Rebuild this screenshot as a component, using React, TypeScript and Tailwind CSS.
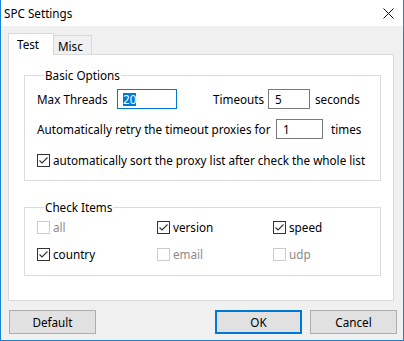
import React from "react";

const font = { fontFamily: '"Noto Sans", "Liberation Sans", Arial, sans-serif' };

function Check({ checked, disabled }: { checked?: boolean; disabled?: boolean }) {
  return (
    <div
      className={`w-[13px] h-[13px] shrink-0 border bg-white flex items-center justify-center ${
        disabled ? "border-[#cccccc]" : "border-[#333333]"
      }`}
    >
      {checked && (
        <svg width="11" height="11" viewBox="0 0 11 11">
          <path d="M1.5 5.5 L4 8 L9.5 2.5" fill="none" stroke="#333333" strokeWidth="1.1" />
        </svg>
      )}
    </div>
  );
}

function CheckItem({ label, checked, disabled }: { label: string; checked?: boolean; disabled?: boolean }) {
  return (
    <div className="flex items-center gap-[3px] h-[16px]">
      <Check checked={checked} disabled={disabled} />
      <span className={disabled ? "text-[#8a8a8a]" : "text-black"}>{label}</span>
    </div>
  );
}

export default function App() {
  return (
    <div
      className="w-[404px] h-[341px] flex flex-col bg-[#f0f0f0] border-l border-r border-b border-[#1883d7] text-[11.7px] leading-[16px] text-black"
      style={font}
    >
      <div className="h-[26px] bg-white flex items-center justify-between pl-[3px] pr-[9px] shrink-0">
        <span>SPC Settings</span>
        <svg width="11" height="11" viewBox="0 0 11 11">
          <path d="M0.5 0.5 L10.5 10.5 M10.5 0.5 L0.5 10.5" stroke="#111" strokeWidth="1" />
        </svg>
      </div>
      <div className="flex-1 flex flex-col pl-[7px] pt-[7px]">
        <div className="flex items-end h-[21px] relative z-10">
          <div className="w-[46px] h-[22px] mb-[-1px] bg-white border-l border-t border-r border-[#d9d9d9] pl-[8px] pt-[2px]">
            Test
          </div>
          <div className="w-[39px] h-[19px] ml-[-1px] border-l border-t border-r border-[#d9d9d9] pl-[4px] pt-[2px]">
            Misc
          </div>
        </div>
        <div className="w-[386px] h-[247px] bg-white border border-[#d9d9d9] flex flex-col pl-[15px] pt-[12px]">
          <fieldset className="w-[357px] h-[114px] border border-[#dcdcdc] pl-[12px]">
            <legend className="ml-[7px] px-[1px] leading-[16px]">Basic Options</legend>
            <div className="flex flex-col pt-[6px]">
              <div className="flex items-center h-[20px]">
                <span className="w-[80px]">Max Threads</span>
                <div className="w-[60px] h-[20px] border border-[#0078d7] flex items-center pl-[5px]">
                  <span className="bg-[#0078d7] text-white leading-[13px]">20</span>
                </div>
                <span className="w-[36px]" />
                <span className="w-[55px]">Timeouts</span>
                <div className="w-[42px] h-[20px] border border-[#7a7a7a] flex items-center pl-[6px]">5</div>
                <span className="ml-[5px]">seconds</span>
              </div>
              <div className="flex items-center h-[20px] mt-[10px]">
                <span className="w-[239px] whitespace-nowrap">Automatically retry the timeout proxies for</span>
                <div className="w-[47px] h-[20px] border border-[#7a7a7a] flex items-center pl-[6px]">1</div>
                <span className="ml-[8px]">times</span>
              </div>
              <div className="mt-[13px]">
                <CheckItem label="automatically sort the proxy list after check the whole list" checked />
              </div>
            </div>
          </fieldset>
          <fieldset className="w-[357px] h-[77px] mt-[18px] border border-[#dcdcdc] pl-[12px]">
            <legend className="ml-[7px] px-[1px] leading-[16px]">Check Items</legend>
            <div className="grid grid-cols-[120px_116px_1fr] gap-y-[11px] pt-[4px]">
              <CheckItem label="all" disabled />
              <CheckItem label="version" checked />
              <CheckItem label="speed" checked />
              <CheckItem label="country" checked />
              <CheckItem label="email" disabled />
              <CheckItem label="udp" disabled />
            </div>
          </fieldset>
        </div>
        <div className="flex mt-[9px] pl-[1px]">
          <button className="w-[87px] h-[24px] bg-[#e1e1e1] border border-[#adadad]">Default</button>
          <button className="w-[87px] h-[24px] ml-[119px] bg-[#e1e1e1] border-2 border-[#0078d7]">OK</button>
          <button className="w-[87px] h-[24px] ml-[8px] bg-[#e1e1e1] border border-[#adadad]">Cancel</button>
        </div>
      </div>
    </div>
  );
}
